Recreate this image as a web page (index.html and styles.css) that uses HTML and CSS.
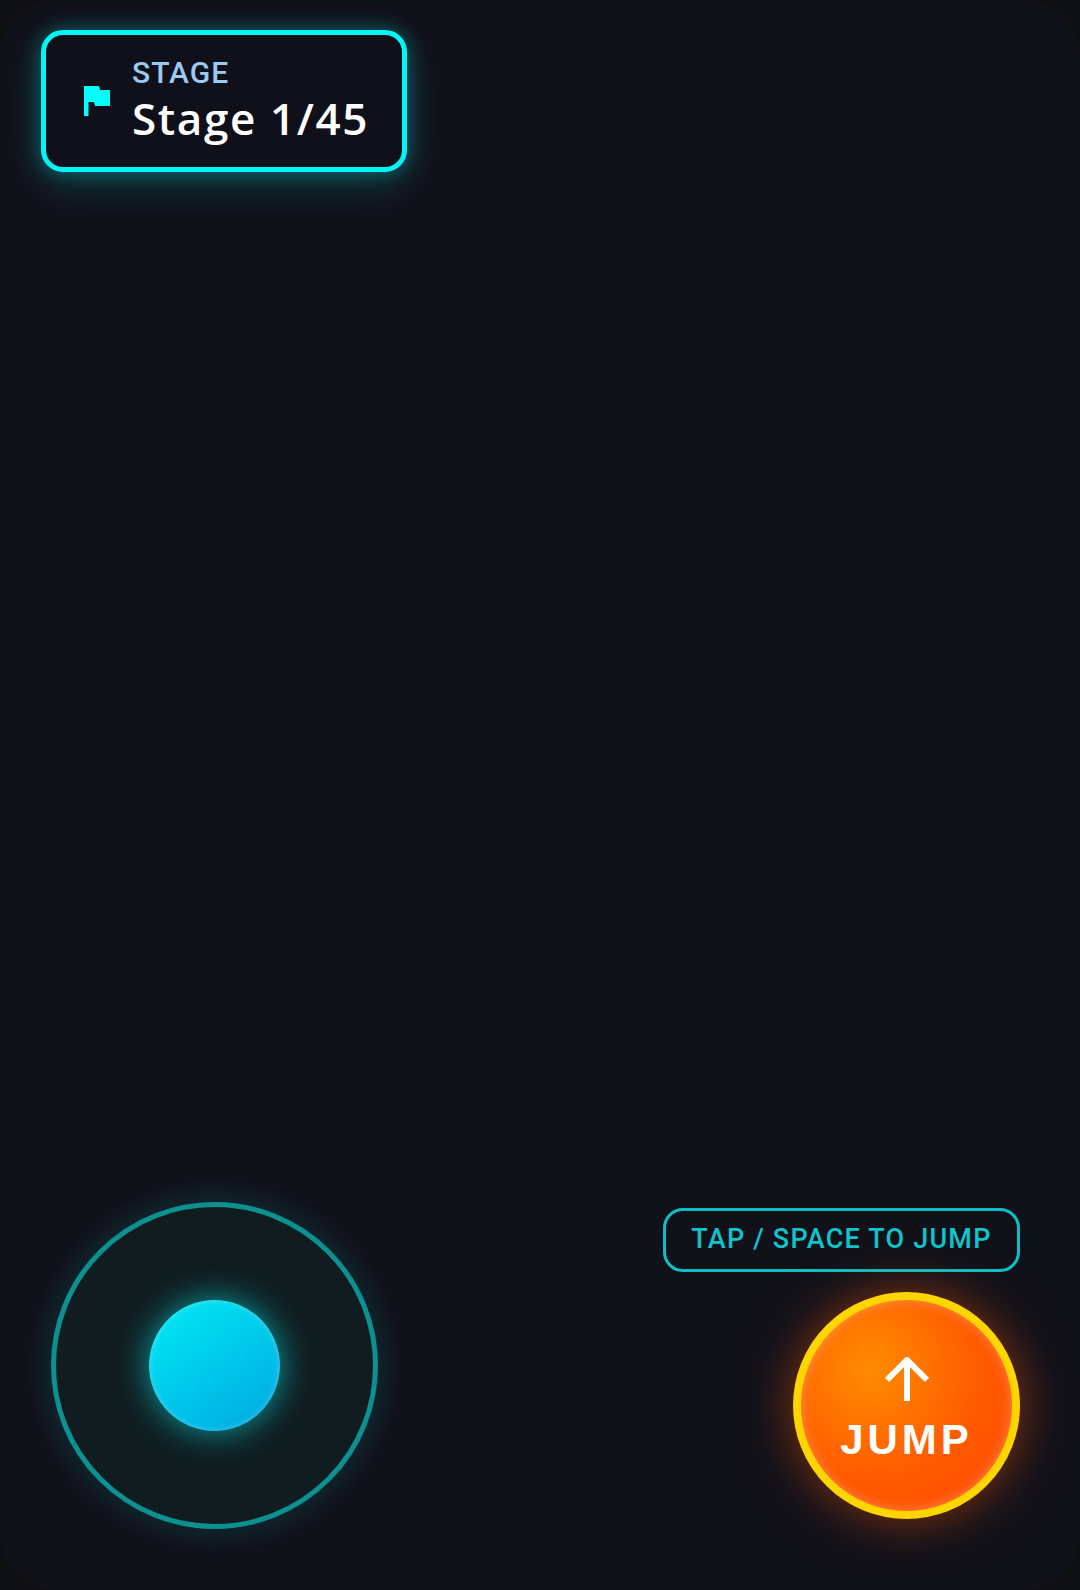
FILE: index.html
```html
<!DOCTYPE html>
<html lang="en">
<head>
<meta charset="utf-8">
<title>Stage HUD</title>
<link rel="stylesheet" href="styles.css">
</head>
<body>
<main class="screen">
  <section class="stage-card">
    <svg class="flag" viewBox="0 0 26 30" aria-hidden="true"><path d="M0 0H15L16 4H26V20H11L10 16H4.5V30H0Z"/></svg>
    <div class="stage-text">
      <div class="stage-label">STAGE</div>
      <div class="stage-value">Stage 1/45</div>
    </div>
  </section>
  <section class="controls">
    <div class="joystick"><div class="knob"></div></div>
    <div class="jump-group">
      <div class="hint">TAP / SPACE TO JUMP</div>
      <button class="jump">
        <svg class="arrow" viewBox="0 0 44 44" aria-hidden="true"><path d="M22 44V3M2 23L22 3L42 23"/></svg>
        <span class="jump-label">JUMP</span>
      </button>
    </div>
  </section>
</main>
</body>
</html>
```
FILE: styles.css
```css
* { box-sizing: border-box; }
html, body { margin: 0; height: 100%; background: #0f1012; }
.screen {
  width: 1080px;
  height: 1590px;
  display: flex;
  flex-direction: column;
  justify-content: space-between;
  padding: 30px 60px 61px 41px;
  background: #11111a;
  border-radius: 56px;
  overflow: hidden;
}
.stage-card {
  width: 366px;
  height: 142px;
  display: flex;
  align-items: center;
  gap: 22px;
  padding-left: 38px;
  border: 5px solid #00f5f5;
  border-radius: 22px;
  background: #10101a;
  box-shadow: 0 0 20px rgba(0, 255, 255, .3), 0 12px 40px rgba(0, 255, 255, .18);
}
.flag { width: 26px; height: 30px; fill: #00ffff; flex: none; }
.stage-text { display: flex; flex-direction: column; padding-bottom: 3px; }
.stage-label {
  font-family: Roboto, sans-serif;
  font-size: 30px;
  line-height: 35px;
  font-weight: 500;
  letter-spacing: 1px;
  color: #9acbf5;
}
.stage-value {
  margin-top: 1px;
  font-family: "Open Sans", sans-serif;
  font-size: 44px;
  line-height: 54px;
  font-weight: 600;
  letter-spacing: 1.6px;
  color: #fff;
}
.controls {
  display: flex;
  justify-content: space-between;
  align-items: flex-end;
  padding-left: 10px;
}
.joystick {
  width: 327px;
  height: 327px;
  display: flex;
  align-items: center;
  justify-content: center;
  border: 5px solid #0d9090;
  border-radius: 50%;
  background: #101c20;
  box-shadow: 0 0 34px rgba(0, 255, 255, .16);
}
.knob {
  width: 131px;
  height: 131px;
  border-radius: 50%;
  background: linear-gradient(145deg, #00ecf4, #00a6e2);
  box-shadow: 0 0 34px rgba(0, 255, 255, .6), inset 0 0 6px rgba(255, 255, 255, .3);
}
.jump-group {
  display: flex;
  flex-direction: column;
  align-items: flex-end;
  gap: 20px;
  margin-bottom: 10px;
}
.hint {
  width: 357px;
  height: 64px;
  display: flex;
  align-items: center;
  justify-content: center;
  padding-bottom: 2px;
  border: 3px solid #0dbfc4;
  border-radius: 20px;
  color: #0dc5cb;
  font-family: Roboto, sans-serif;
  font-size: 27px;
  font-weight: 500;
  letter-spacing: 1.2px;
}
.jump {
  width: 227px;
  height: 227px;
  display: flex;
  flex-direction: column;
  align-items: center;
  justify-content: center;
  gap: 18px;
  padding: 6px 0 0;
  border: 8px solid #ffd500;
  border-radius: 50%;
  background: radial-gradient(circle at 33% 33%, #ff8c00, #ff5a00 55%, #ff4a08);
  box-shadow: 0 0 48px rgba(255, 90, 0, .5), inset 0 0 12px rgba(255, 180, 150, .55);
}
.arrow { width: 44px; height: 44px; fill: none; stroke: #fff; stroke-width: 6; }
.jump-label {
  color: #fff;
  font-family: "Liberation Sans", sans-serif;
  font-size: 42px;
  line-height: 42px;
  font-weight: 700;
  letter-spacing: 4px;
}
```
